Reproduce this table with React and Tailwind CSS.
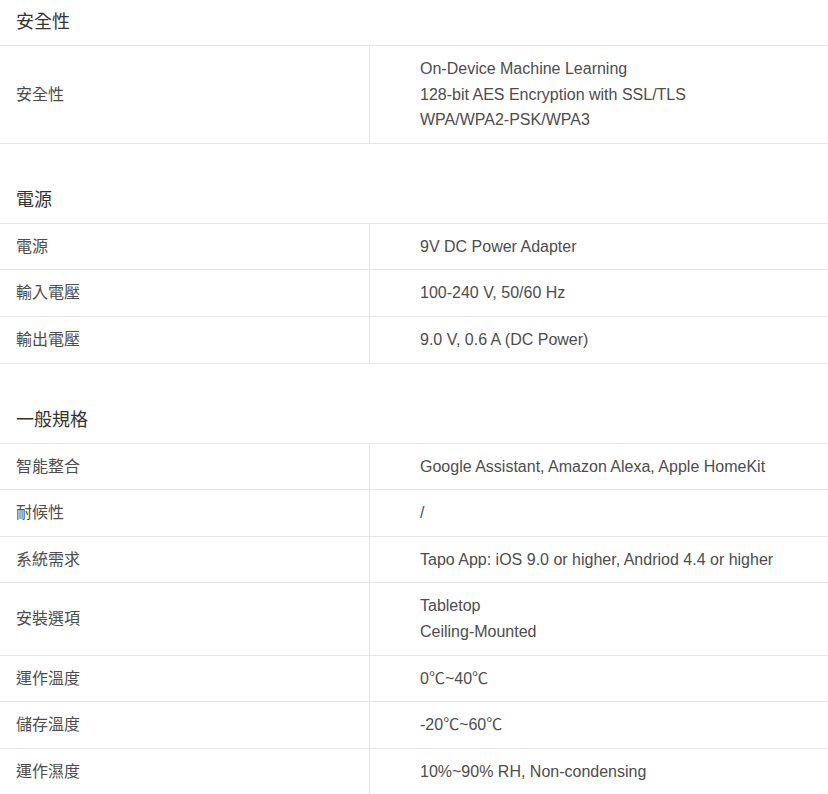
import React from "react";

const sections = [
  {
    title: "安全性",
    rows: [
      ["安全性", ["On-Device Machine Learning", "128-bit AES Encryption with SSL/TLS", "WPA/WPA2-PSK/WPA3"]],
    ],
  },
  {
    title: "電源",
    rows: [
      ["電源", ["9V DC Power Adapter"]],
      ["輸入電壓", ["100-240 V, 50/60 Hz"]],
      ["輸出電壓", ["9.0 V, 0.6 A (DC Power)"]],
    ],
  },
  {
    title: "一般規格",
    rows: [
      ["智能整合", ["Google Assistant, Amazon Alexa, Apple HomeKit"]],
      ["耐候性", ["/"]],
      ["系統需求", ["Tapo App: iOS 9.0 or higher, Andriod 4.4 or higher"]],
      ["安裝選項", ["Tabletop", "Ceiling-Mounted"]],
      ["運作溫度", ["0℃~40℃"]],
      ["儲存溫度", ["-20℃~60℃"]],
      ["運作濕度", ["10%~90% RH, Non-condensing"]],
    ],
  },
];

export default function App() {
  return (
    <div
      className="w-[828px] bg-white"
      style={{ fontFamily: '"Liberation Sans", Arial, "Noto Sans CJK TC", sans-serif' }}
    >
      {sections.map((s, i) => (
        <div key={s.title} className={i > 0 ? "mt-[34px]" : ""}>
          <div className="h-[46px] border-b border-[#e5e5ea] pl-4 flex items-start pt-[8px] text-[18px] leading-[1.6] text-[#333333]">
            {s.title}
          </div>
          {s.rows.map(([label, vals]) => (
            <div key={label} className="grid grid-cols-[369px_1fr] border-b border-[#e5e5ea]">
              <div className="pl-4 py-2.5 flex items-center text-base leading-[1.6] text-[#4d4d4d]">
                {label}
              </div>
              <div className="border-l border-[#e5e5ea] pl-[50px] py-2.5 text-base leading-[1.6] text-[#4d4d4d]">
                {vals.map((v) => (
                  <div key={v}>{v}</div>
                ))}
              </div>
            </div>
          ))}
        </div>
      ))}
    </div>
  );
}
